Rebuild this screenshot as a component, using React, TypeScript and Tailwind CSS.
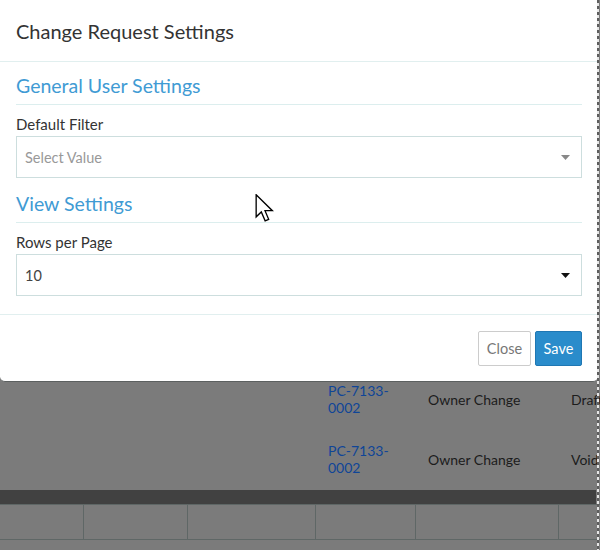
import React from "react";

function Caret({ color }: { color: string }) {
  return (
    <svg width="9" height="5" viewBox="0 0 9 5" className="shrink-0">
      <path d="M0 0 L9 0 L4.5 5 Z" fill={color} />
    </svg>
  );
}

function Cursor() {
  return (
    <svg width="20" height="28" viewBox="0 0 13 19" className="absolute left-[255px] top-[194px]">
      <path
        d="M0.5 0.5 L0.5 15.5 L4 12.2 L6.6 18.2 L9 17.2 L6.5 11.3 L11.5 11.3 Z"
        fill="#fff"
        stroke="#000"
        strokeWidth="0.9"
        strokeLinejoin="miter"
      />
    </svg>
  );
}

function BgRow({ status }: { status: string }) {
  return (
    <div className="flex h-[60px] items-center text-[14px] leading-[17px] text-[#1c1c1c]">
      <div className="w-[84px] shrink-0 overflow-hidden">
        <span className="-ml-[6px] text-[#0f4597]">t</span>
      </div>
      <div className="w-[104px] shrink-0" />
      <div className="w-[128px] shrink-0" />
      <div className="w-[100px] shrink-0 pl-[12px] text-[#0f4597]">
        PC-7133-
        <br />
        0002
      </div>
      <div className="w-[143px] shrink-0 pl-[12px]">Owner Change</div>
      <div className="pl-[12px] whitespace-nowrap">{status}</div>
    </div>
  );
}

export default function App() {
  return (
    <div
      className="relative w-[600px] h-[550px] overflow-hidden bg-[#7b7b7b]"
      style={{ fontFamily: "Lato, 'Noto Sans', sans-serif" }}
    >
      {/* background page */}
      <div className="flex flex-col pt-[369px]">
        <BgRow status="Draft" />
        <BgRow status="Void" />
        <div className="mt-[1px] h-[14px] w-[596px] bg-[#414141]" />
        <div className="flex h-[36px] border-y border-[#5f6766]">
          <div className="w-[83px] shrink-0" />
          <div className="w-[104px] shrink-0 border-l border-[#5f6766]" />
          <div className="w-[128px] shrink-0 border-l border-[#5f6766]" />
          <div className="w-[100px] shrink-0 border-l border-[#5f6766]" />
          <div className="w-[143px] shrink-0 border-l border-[#5f6766]" />
          <div className="flex-1 border-l border-[#5f6766]" />
        </div>
        <div className="flex-1 bg-[#818181]" />
      </div>

      {/* modal */}
      <div className="absolute left-0 top-0 w-[598px] bg-white rounded-b-[5px] border-b border-[#5c6060]">
        <div className="h-[62px] border-b border-[#e1efef] px-[16px] flex items-center">
          <div className="text-[20px] leading-[24px] text-[#333] pt-[1px]">Change Request Settings</div>
        </div>
        <div className="px-[16px] pt-[12px] pb-[18px]">
          <div className="text-[19.5px] leading-[24px] text-[#3f9bd4] pb-[6px] border-b border-[#dceeee]">
            General User Settings
          </div>
          <div className="mt-[9px] text-[15px] leading-[20px] text-[#333]">Default Filter</div>
          <div className="mt-[2px] h-[42px] border border-[#cddede] flex items-center justify-between pl-[8px] pr-[11px]">
            <span className="text-[14.5px] text-[#999] pt-[2px]">Select Value</span>
            <Caret color="#888" />
          </div>
          <div className="mt-[14px] text-[19.5px] leading-[24px] text-[#3f9bd4] pb-[6px] border-b border-[#dceeee]">
            View Settings
          </div>
          <div className="mt-[9px] text-[15px] leading-[20px] text-[#333]">Rows per Page</div>
          <div className="mt-[2px] h-[42px] border border-[#cddede] flex items-center justify-between pl-[8px] pr-[11px]">
            <span className="text-[14.5px] text-[#444] pt-[2px]">10</span>
            <Caret color="#111" />
          </div>
        </div>
        <div className="border-t border-[#e1efef] px-[16px] pt-[16px] pb-[15px] flex justify-end gap-[4px]">
          <button className="h-[35px] w-[53px] border border-[#ccc] rounded-[2px] bg-white text-[14.5px] text-[#777]">
            Close
          </button>
          <button className="h-[35px] w-[47px] border border-[#1f77b3] rounded-[2px] bg-[#2a8ccb] text-[14.5px] text-white">
            Save
          </button>
        </div>
      </div>

      <Cursor />

      {/* dashed selection edge */}
      <div className="absolute left-[597px] top-0 bottom-0 w-[2px] bg-[repeating-linear-gradient(to_bottom,#5e5e5e_0px,#5e5e5e_3px,#e6e6e6_3px,#e6e6e6_6px)]" />
    </div>
  );
}
